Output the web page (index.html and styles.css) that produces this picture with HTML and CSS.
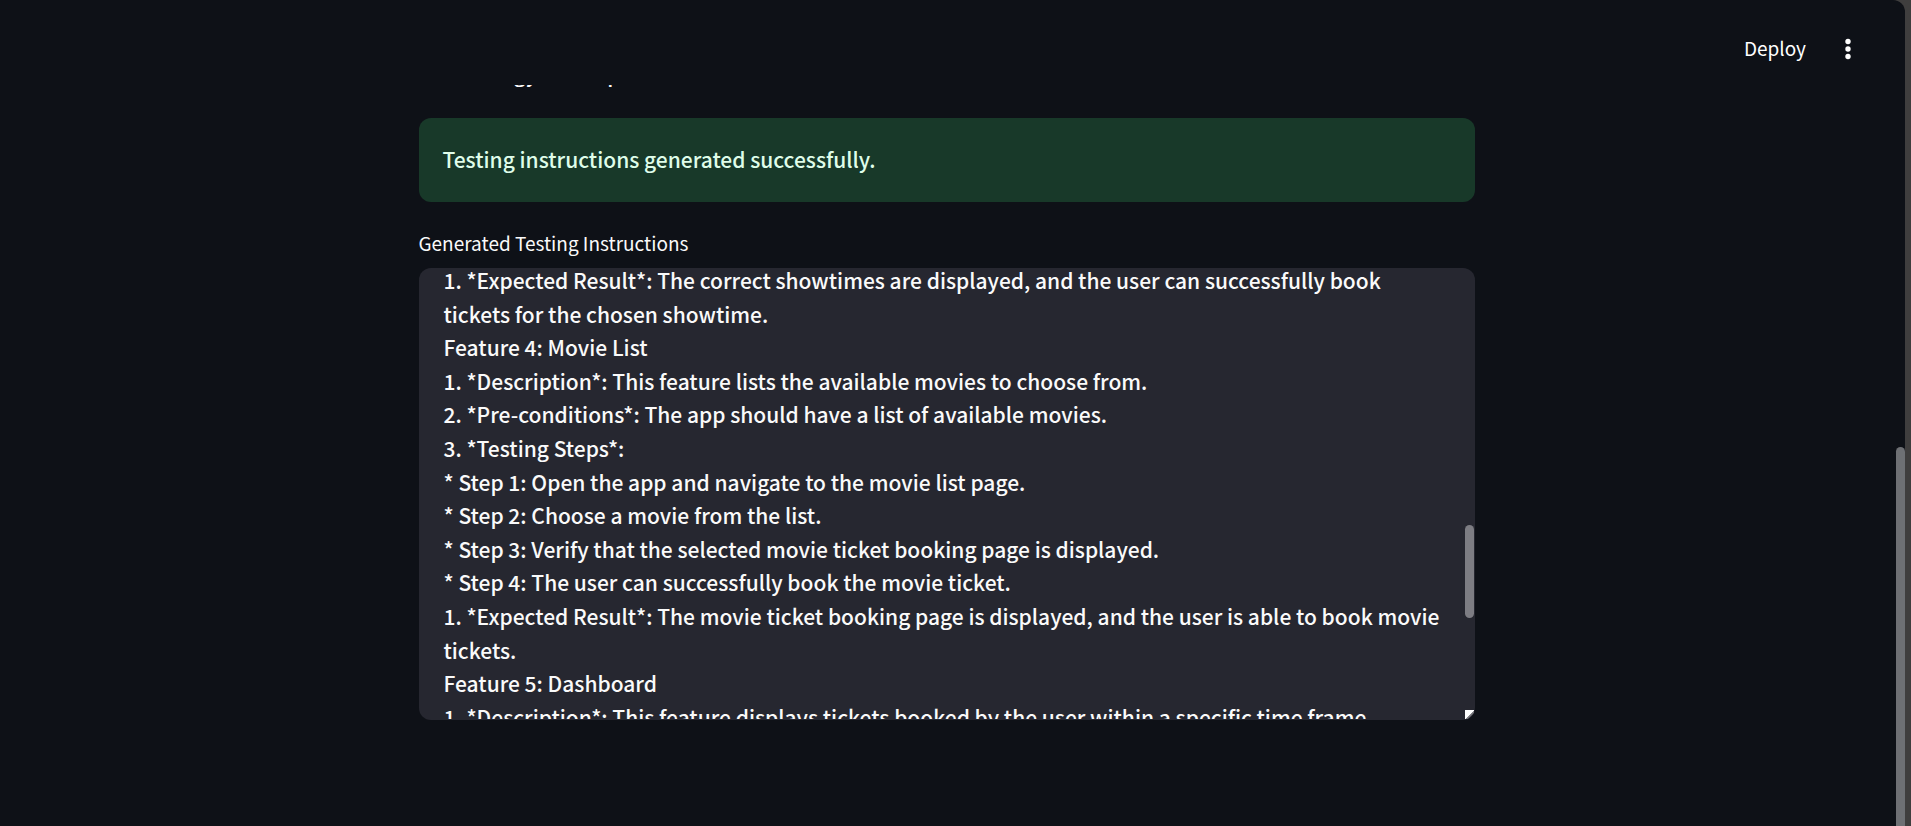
FILE: index.html
```html
<!DOCTYPE html>
<html lang="en">
<head>
<meta charset="utf-8">
<title>Testing Instructions</title>
<link rel="stylesheet" href="styles.css">
</head>
<body>
<div class="app">
  <header class="toolbar">
    <button class="deploy" type="button">Deploy</button>
    <button class="menu" type="button" aria-label="Main menu">
      <svg viewBox="0 0 24 24" width="24" height="24" fill="currentColor" aria-hidden="true">
        <circle cx="12" cy="4.5" r="2.7"/><circle cx="12" cy="12" r="2.7"/><circle cx="12" cy="19.5" r="2.7"/>
      </svg>
    </button>
  </header>
  <main class="content">
    <div class="column">
      <div class="scrolled"><span>gy</span><span>p</span></div>
      <div class="alert" role="alert">Testing instructions generated successfully.</div>
      <label class="label" for="instructions">Generated Testing Instructions</label>
      <div class="field">
        <textarea class="text" id="instructions" spellcheck="false">1. *Expected Result*: The correct showtimes are displayed, and the user can successfully book tickets for the chosen showtime.
Feature 4: Movie List
1. *Description*: This feature lists the available movies to choose from.
2. *Pre-conditions*: The app should have a list of available movies.
3. *Testing Steps*:
* Step 1: Open the app and navigate to the movie list page.
* Step 2: Choose a movie from the list.
* Step 3: Verify that the selected movie ticket booking page is displayed.
* Step 4: The user can successfully book the movie ticket.
1. *Expected Result*: The movie ticket booking page is displayed, and the user is able to book movie tickets.
Feature 5: Dashboard
1. *Description*: This feature displays tickets booked by the user within a specific time frame.</textarea>
        <div class="field-thumb"></div>
        <svg class="grip" viewBox="0 0 9 9" width="9" height="9" aria-hidden="true">
          <path d="M0 0H9V1L1 9H0Z" fill="#fff"/><path d="M9 1V3L3 9H1Z" fill="#77777c"/>
        </svg>
      </div>
    </div>
  </main>
  <div class="page-thumb"></div>
</div>
<script src="script.js"></script>
</body>
</html>
```
FILE: styles.css
```css
* { box-sizing: border-box; }

body {
  margin: 0;
  background: #3f3e3e;
  color: #fafafa;
  font-family: "Noto Sans CJK SC", "Noto Sans", sans-serif;
  font-size: 21px;
  line-height: 1.6;
}

.app {
  position: relative;
  display: flex;
  flex-direction: column;
  height: 100vh;
  margin-right: 6px;
  padding-right: 12px;
  overflow: hidden;
  background: #0e1117;
  border-top-right-radius: 12px;
}

.toolbar {
  flex: none;
  display: flex;
  align-items: center;
  justify-content: flex-end;
  gap: 30px;
  height: 85px;
  padding: 12px 33px 0 0;
}

.deploy, .menu {
  padding: 0;
  border: 0;
  background: none;
  color: #fff;
  font: inherit;
  cursor: pointer;
}

.deploy { font-size: 19px; }
.menu { display: flex; }

.content {
  flex: 1;
  min-height: 0;
  overflow: hidden;
}

.column {
  display: flex;
  flex-direction: column;
  max-width: 1056px;
  margin: 0 auto;
}

.scrolled {
  display: flex;
  align-items: flex-end;
  gap: 70px;
  height: 6px;
  margin-bottom: 27px;
  padding-left: 95px;
  font-weight: 500;
}

.alert {
  padding: 25px 24px;
  border-radius: 12px;
  background: #183929;
  color: #dffde9;
  font-weight: 500;
}

.label {
  margin-top: 26px;
  font-size: 19px;
}

.field {
  position: relative;
  margin-top: 10px;
  padding: 1px;
  border-radius: 12px;
  background: #262730;
  overflow: hidden;
}

.text {
  display: block;
  width: 100%;
  height: 450px;
  padding: 24px 32px 24px 24px;
  border: 0;
  outline: 0;
  background: transparent;
  color: inherit;
  font: inherit;
  font-weight: 500;
  resize: none;
  scrollbar-width: none;
}

.field-thumb {
  position: absolute;
  top: 257px;
  right: 1px;
  width: 9px;
  height: 93px;
  border-radius: 5px;
  background: #7d7d83;
}

.grip {
  position: absolute;
  right: 1px;
  bottom: 1px;
}

.page-thumb {
  position: absolute;
  top: 447px;
  right: 0;
  bottom: 0;
  width: 9px;
  border-radius: 5px 5px 0 0;
  background: #6e7074;
}
```
FILE: script.js
```js
document.getElementById("instructions").scrollTop = 29;
```
